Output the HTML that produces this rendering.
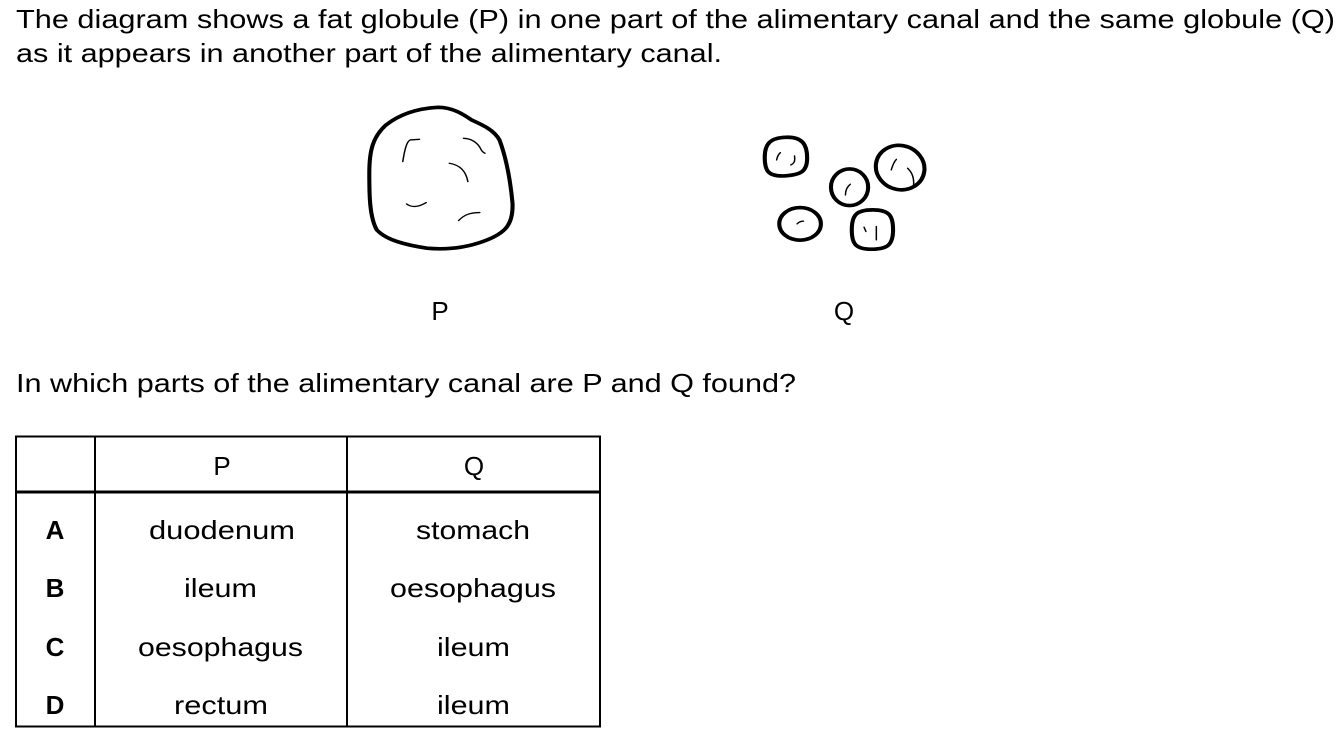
<!DOCTYPE html>
<html><head><meta charset="utf-8"><style>
html,body{margin:0;padding:0;background:#fff;width:1342px;height:744px;overflow:hidden}
svg{position:absolute;left:0;top:0}
text{font-family:"Liberation Sans",Arial,sans-serif;fill:#000}
</style></head><body>
<svg width="1342" height="744" viewBox="0 0 1342 744">
<text x="16" y="28" font-size="26" textLength="1319" lengthAdjust="spacingAndGlyphs">The diagram shows a fat globule (P) in one part of the alimentary canal and the same globule (Q)</text>
<text x="16" y="62" font-size="26" textLength="706" lengthAdjust="spacingAndGlyphs">as it appears in another part of the alimentary canal.</text>

<g transform="translate(360,100) scale(0.372,0.333)" fill="none" stroke="#000" stroke-linecap="round" stroke-linejoin="round">
<path stroke-width="11" d="M210,22 C250,22 280,45 300,60 C330,75 360,90 375,120 C395,180 405,250 410,310 C412,370 395,400 330,425 C280,445 230,450 180,445 C120,435 70,420 45,390 C25,350 25,280 25,220 C25,150 35,110 70,75 C110,40 160,25 210,22 Z"/>
<g stroke-width="4">
<path d="M115,185 C120,150 125,125 135,120 L160,118"/>
<path d="M278,115 C300,115 318,130 325,148 C328,155 332,158 336,160"/>
<path d="M240,190 C270,195 285,215 290,245"/>
<path d="M125,312 C140,325 160,320 178,308"/>
<path d="M265,362 C280,345 295,338 322,338"/>
</g>
<path stroke-width="11" d="M1145,112 C1190,110 1202,135 1202,175 C1202,215 1185,225 1140,228 C1095,230 1088,210 1088,172 C1088,130 1105,113 1145,112 Z"/>
<path stroke-width="4" d="M1120,180 C1122,168 1126,162 1130,158 M1168,168 C1170,182 1168,190 1158,195"/>
<ellipse stroke-width="11" cx="1452" cy="203" rx="64" ry="68" transform="rotate(-35 1452 203)"/>
<path stroke-width="4" d="M1428,210 C1432,195 1436,185 1442,178 M1472,205 C1485,218 1490,235 1488,258"/>
<ellipse stroke-width="11" cx="1316" cy="262" rx="50" ry="55"/>
<path stroke-width="4" d="M1305,285 C1305,270 1310,260 1318,253"/>
<ellipse stroke-width="11" cx="1183" cy="372" rx="56" ry="49"/>
<path stroke-width="4" d="M1175,372 C1180,366 1186,364 1192,364"/>
<path stroke-width="11" d="M1378,330 C1425,330 1433,350 1433,390 C1433,435 1418,448 1375,448 C1332,448 1322,432 1322,390 C1322,345 1335,330 1378,330 Z"/>
<path stroke-width="4" d="M1355,382 L1360,395 M1388,380 L1388,420"/>
</g>

<text x="440" y="320" font-size="26" text-anchor="middle">P</text>
<text x="844" y="320" font-size="26" text-anchor="middle">Q</text>

<text x="16" y="392" font-size="26" textLength="780" lengthAdjust="spacingAndGlyphs">In which parts of the alimentary canal are P and Q found?</text>

<g stroke="#000" fill="none">
<rect x="16" y="436.5" width="584" height="290" stroke-width="2"/>
<line x1="16" y1="492" x2="600" y2="492" stroke-width="3"/>
<line x1="95" y1="436" x2="95" y2="727" stroke-width="2"/>
<line x1="347" y1="436" x2="347" y2="727" stroke-width="2"/>
</g>
<g font-size="26">
<text x="222" y="475" text-anchor="middle">P</text><text x="474" y="475" text-anchor="middle">Q</text>
<text x="55" y="539" font-weight="bold" text-anchor="middle">A</text>
<text x="149" y="539" textLength="146" lengthAdjust="spacingAndGlyphs">duodenum</text>
<text x="416" y="539" textLength="114" lengthAdjust="spacingAndGlyphs">stomach</text>
<text x="55" y="597" font-weight="bold" text-anchor="middle">B</text>
<text x="184" y="597" textLength="73" lengthAdjust="spacingAndGlyphs">ileum</text>
<text x="390" y="597" textLength="166" lengthAdjust="spacingAndGlyphs">oesophagus</text>
<text x="55" y="656" font-weight="bold" text-anchor="middle">C</text>
<text x="138" y="656" textLength="165" lengthAdjust="spacingAndGlyphs">oesophagus</text>
<text x="437" y="656" textLength="73" lengthAdjust="spacingAndGlyphs">ileum</text>
<text x="55" y="714" font-weight="bold" text-anchor="middle">D</text>
<text x="174" y="714" textLength="94" lengthAdjust="spacingAndGlyphs">rectum</text>
<text x="437" y="714" textLength="73" lengthAdjust="spacingAndGlyphs">ileum</text>
</g>
</svg>
</body></html>
